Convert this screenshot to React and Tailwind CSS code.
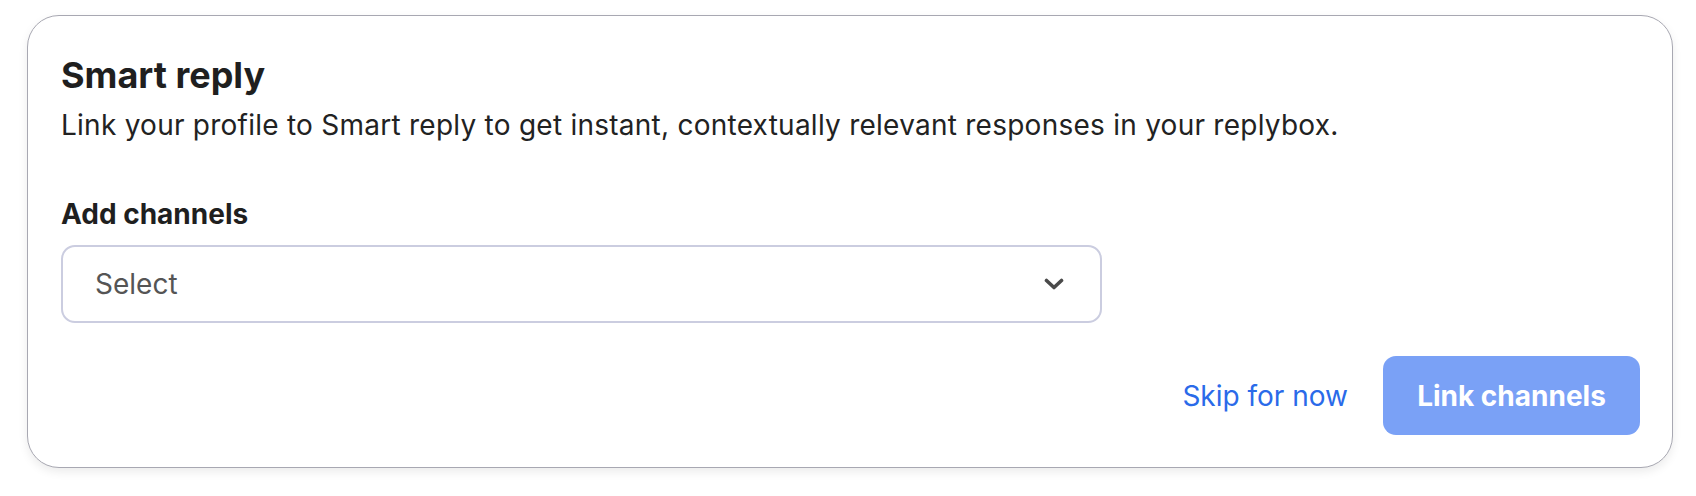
import React from 'react';

const ChevronDown = () => (
    <svg width="20" height="12" viewBox="0 0 20 12" fill="none">
        <path d="M2.5 2.5 L10 9.5 L17.5 2.5" stroke="#4a4a4a" strokeWidth="3.6" strokeLinecap="round" strokeLinejoin="round" />
    </svg>
);

const App = () => {
    return (
        <div className="w-full h-[496px] bg-white pt-[15px] pl-[27px] pr-[23px] font-['Inter','Noto_Sans',sans-serif]">
            {/* TARJETA SMART REPLY */}
            <div className="bg-white border-[1.5px] border-[#a8a8b2] rounded-[32px] shadow-[0_4px_10px_rgba(0,0,0,0.08)] pt-[37px] pb-[32px] pl-[33px] pr-[32px]">
                <h2 className="text-[36px] leading-[44px] font-bold text-[#1f1f1f]">Smart reply</h2>
                <p className="mt-[10px] text-[28px] leading-[36px] tracking-[0.25px] text-[#222222]">
                    Link your profile to Smart reply to get instant, contextually relevant responses in your replybox.
                </p>

                <label className="block mt-[53px] text-[28px] leading-[36px] font-bold text-[#1f1f1f]">Add channels</label>
                <button
                    type="button"
                    className="mt-[13px] w-[1041px] h-[78px] flex items-center justify-between pl-[32px] pr-[36px] border-2 border-[#cbcde0] rounded-[14px] bg-white text-left"
                >
                    <span className="text-[28px] leading-[36px] text-[#555555]">Select</span>
                    <ChevronDown />
                </button>

                {/* ACCIONES */}
                <div className="mt-[33px] flex items-center justify-end gap-[35px]">
                    <button type="button" className="text-[28px] leading-[36px] text-[#2a6ae9]">Skip for now</button>
                    <button
                        type="button"
                        className="w-[257px] h-[79px] rounded-[13px] bg-[#7aa1f6] text-white text-[28px] leading-[36px] font-bold"
                    >
                        Link channels
                    </button>
                </div>
            </div>
        </div>
    );
};

export default App;
